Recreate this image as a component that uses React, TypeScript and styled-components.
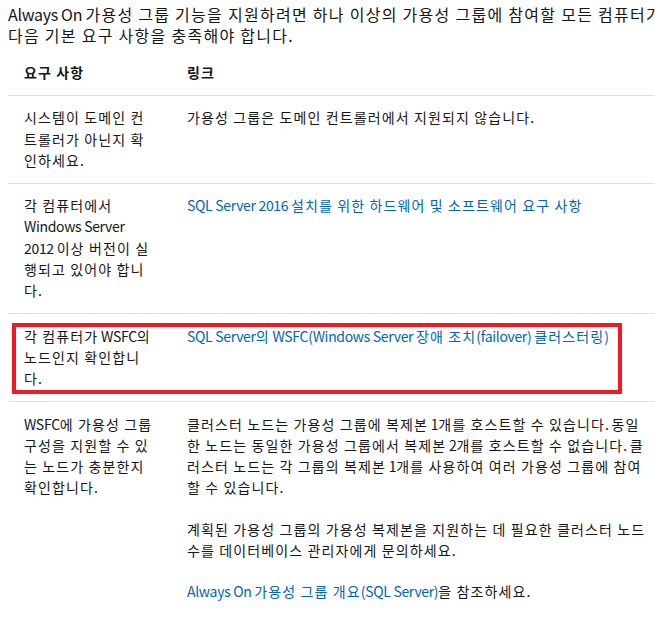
import React from "react";
import styled, { createGlobalStyle } from "styled-components";

const Global = createGlobalStyle`
  html, body {
    margin: 0;
    padding: 0;
    background: #ffffff;
    overflow: hidden;
  }
  body {
    font-family: "Noto Sans CJK KR", "Noto Sans", sans-serif;
    color: #161616;
    letter-spacing: -0.02em;
  }
`;

const Page = styled.main`
  padding: 0 0 0 8px;
  width: 654px;
`;

const Intro = styled.p`
  margin: 4px 0 4.5px;
  width: 662px;
  font-size: 16px;
  line-height: 21px;
`;

const Hangul = styled.span`
  letter-spacing: 0.08em;
`;

const Table = styled.div`
  width: 654px;
  font-size: 14px;
  line-height: 21.3px;
`;

const Row = styled.div`
  position: relative;
  display: grid;
  grid-template-columns: 163px 1fr;
  border-bottom: 1px solid #e2e2e2;

  &:last-child {
    border-bottom: none;
  }
`;

const Mark = styled.div`
  position: absolute;
  left: 4px;
  top: 8.5px;
  width: 610px;
  height: 71px;
  box-sizing: border-box;
  border: 4px solid #ed1c24;
  pointer-events: none;
`;

const Cell = styled.div<{ $first?: boolean; $head?: boolean }>`
  padding: ${(p) => (p.$first ? "11.5px 17px 11.5px 16px" : "11.5px 16px")};
  font-weight: ${(p) => (p.$head ? 700 : 400)};
`;

const Para = styled.p`
  margin: 0;
  & + & {
    margin-top: 20px;
  }
`;

const Link = styled.a`
  color: #0065b3;
  text-decoration: none;
`;

const HANGUL_RUN = /([\uAC00-\uD7A3]+(?:\s+[\uAC00-\uD7A3]+)*)/g;

function Ko({ t }: { t: string }) {
  const parts = t.split(HANGUL_RUN);
  return (
    <>
      {parts.map((p, i) => (i % 2 === 1 ? <Hangul key={i}>{p}</Hangul> : p))}
    </>
  );
}

export default function App() {
  return (
    <>
      <Global />
      <Page>
        <Intro>
          <Ko t="Always On 가용성 그룹 기능을 지원하려면 하나 이상의 가용성 그룹에 참여할 모든 컴퓨터가 다음 기본 요구 사항을 충족해야 합니다." />
        </Intro>
        <Table>
          <Row>
            <Cell $first $head>
              <Ko t="요구 사항" />
            </Cell>
            <Cell $head>
              <Ko t="링크" />
            </Cell>
          </Row>
          <Row>
            <Cell $first>
              <Ko t="시스템이 도메인 컨트롤러가 아닌지 확인하세요." />
            </Cell>
            <Cell>
              <Ko t="가용성 그룹은 도메인 컨트롤러에서 지원되지 않습니다." />
            </Cell>
          </Row>
          <Row>
            <Cell $first>
              <Ko t="각 컴퓨터에서 Windows Server 2012 이상 버전이 실행되고 있어야 합니다." />
            </Cell>
            <Cell>
              <Link href="#">
                <Ko t="SQL Server 2016 설치를 위한 하드웨어 및 소프트웨어 요구 사항" />
              </Link>
            </Cell>
          </Row>
          <Row>
            <Cell $first>
              <Ko t="각 컴퓨터가 WSFC의 노드인지 확인합니다." />
            </Cell>
            <Cell>
              <Link href="#">
                <Ko t="SQL Server의 WSFC(Windows Server 장애 조치(failover) 클러스터링)" />
              </Link>
            </Cell>
            <Mark />
          </Row>
          <Row>
            <Cell $first>
              <Ko t="WSFC에 가용성 그룹 구성을 지원할 수 있는 노드가 충분한지 확인합니다." />
            </Cell>
            <Cell>
              <Para>
                <Ko t="클러스터 노드는 가용성 그룹에 복제본 1개를 호스트할 수 있습니다. 동일한 노드는 동일한 가용성 그룹에서 복제본 2개를 호스트할 수 없습니다. 클러스터 노드는 각 그룹의 복제본 1개를 사용하여 여러 가용성 그룹에 참여할 수 있습니다." />
              </Para>
              <Para>
                <Ko t="계획된 가용성 그룹의 가용성 복제본을 지원하는 데 필요한 클러스터 노드 수를 데이터베이스 관리자에게 문의하세요." />
              </Para>
              <Para>
                <Link href="#">
                  <Ko t="Always On 가용성 그룹 개요(SQL Server)" />
                </Link>
                <Ko t="을 참조하세요." />
              </Para>
            </Cell>
          </Row>
        </Table>
      </Page>
    </>
  );
}
